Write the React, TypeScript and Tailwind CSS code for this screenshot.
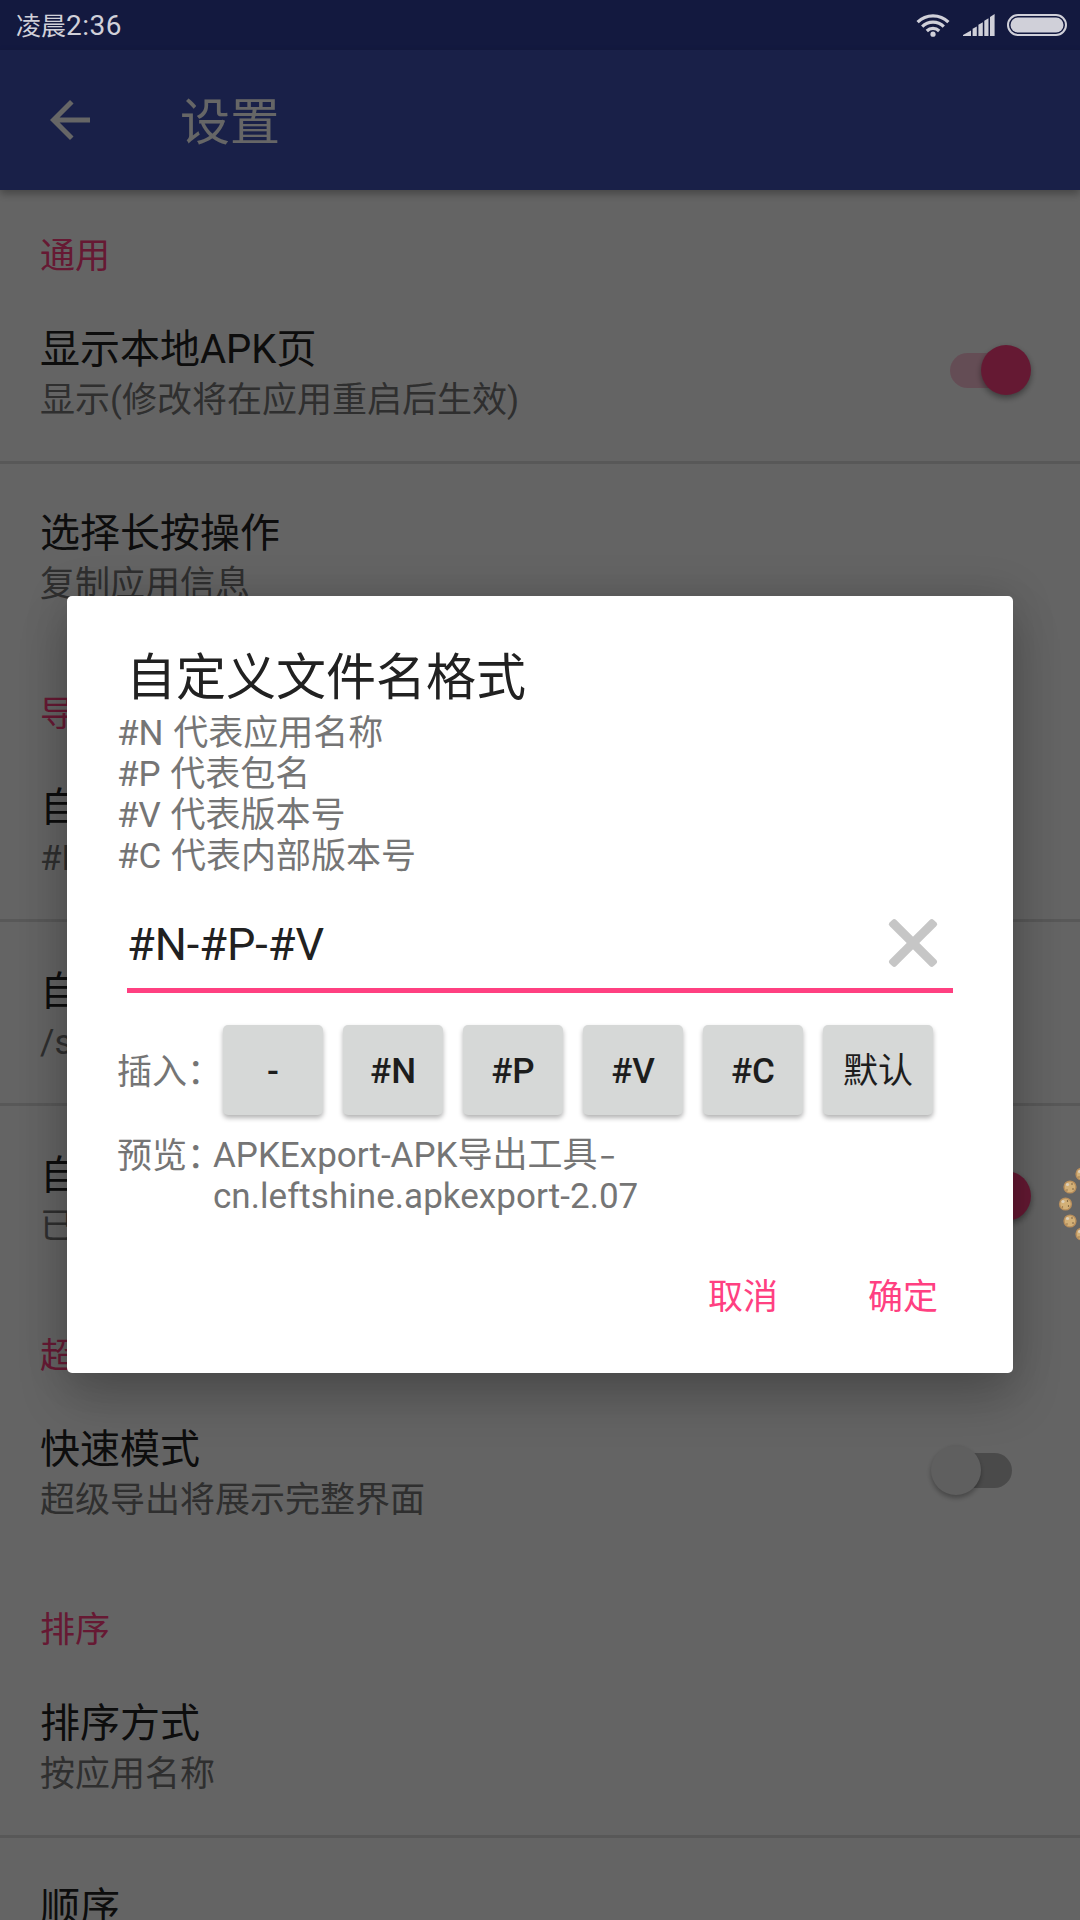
import React from 'react';

function Switch({ on }: { on?: boolean }) {
  return (
    <div className="flex h-[50px] w-[100px] shrink-0 items-center">
      <div
        className={
          on
            ? 'relative mx-[19px] h-[35px] w-[62px] rounded-full bg-[#FF4081]/30'
            : 'relative mx-[19px] h-[35px] w-[62px] rounded-full bg-[#bababa]'
        }
      >
        <div
          className={
            on
              ? 'absolute -top-[8px] -right-[19px] size-[50px] rounded-full bg-[#fd4081] shadow-[0_3px_6px_rgba(0,0,0,0.4)]'
              : 'absolute -top-[8px] -left-[19px] size-[50px] rounded-full bg-[#ededed] shadow-[0_3px_5px_rgba(0,0,0,0.3)]'
          }
        />
      </div>
    </div>
  );
}

function Section({ title, first }: { title: string; first?: boolean }) {
  return (
    <div
      className={
        first
          ? 'flex h-[90px] items-end px-10 text-[35px] leading-[47px] text-[#FF4081]'
          : 'flex h-[93px] items-end px-10 text-[35px] leading-[47px] text-[#FF4081]'
      }
    >
      {title}
    </div>
  );
}

interface PrefProps {
  title: string;
  summary: string;
  toggle?: 'on' | 'off';
  divider?: boolean;
}

function Pref({ title, summary, toggle, divider }: PrefProps) {
  return (
    <div
      className={
        divider
          ? 'flex h-[184px] items-center justify-between border-b-[3px] border-[#dddddd] pr-[49px] pl-10'
          : 'flex h-[181px] items-center justify-between pr-[49px] pl-10'
      }
    >
      <div className="flex flex-col pt-[7px]">
        <div className="text-[40px] leading-[52px] whitespace-nowrap text-[#212121]">{title}</div>
        <div className="text-[35px] leading-[49px] whitespace-nowrap text-[#757575]">{summary}</div>
      </div>
      {toggle && <Switch on={toggle === 'on'} />}
    </div>
  );
}

function StatusBar() {
  return (
    <div className="h-[50px] bg-[#303F9F]">
      <div className="relative z-20 flex h-[50px] items-center justify-between pr-[13px] pl-4 text-[#d0d0d9]">
        <span className="pt-[2px] text-[25px] leading-[50px]">
          凌晨<span className="text-[28px] tracking-[0.5px]">2:36</span>
        </span>
        <div className="flex items-center">
          <svg width="34" height="24" viewBox="0 0 34 24" fill="none" stroke="currentColor" strokeWidth="3.2">
            <path d="M1.6 9.2a21.8 21.8 0 0 1 30.8 0" />
            <path d="M6.2 13.6a15.3 15.3 0 0 1 21.6 0" />
            <path d="M10.8 18a8.8 8.8 0 0 1 12.4 0" />
            <circle cx="17" cy="21.2" r="2.6" fill="currentColor" stroke="none" />
          </svg>
          <svg className="ml-[13px]" width="33" height="22" viewBox="0 0 33 22" fill="currentColor">
            <path d="M0 22v-1l8-4.6V22z" />
            <path d="M9.600 22v-7.200l4.200-2.400V22z" />
            <path d="M15.400 22V10.800l4.400-2.600V22z" />
            <path d="M21.300 22V6.800l4.200-2.500V22z" />
            <path d="M27 22V3l4.600-3V22z" />
          </svg>
          <svg className="ml-[11px]" width="60" height="22" viewBox="0 0 60 22" fill="none">
            <rect x="1" y="1" width="58" height="20" rx="10" stroke="currentColor" strokeWidth="2" />
            <rect x="3.500" y="3.500" width="53" height="15" rx="7.500" fill="currentColor" />
          </svg>
        </div>
      </div>
    </div>
  );
}

function AppBar() {
  return (
    <div className="relative flex h-[140px] items-center bg-[#3F51B5] pl-10 text-white shadow-[0_4px_8px_rgba(0,0,0,0.3)]">
      <svg width="60" height="60" viewBox="0 0 24 24" fill="currentColor">
        <path d="M20 11H7.830l5.590-5.590L12 4l-8 8 8 8 1.410-1.410L7.830 13H20v-2z" />
      </svg>
      <div className="pt-[5px] pl-20 text-[50px] leading-[60px]">设置</div>
    </div>
  );
}

const keys = ['-', '#N', '#P', '#V', '#C'];

function FormatDialog() {
  return (
    <div className="flex h-[777px] w-[946px] flex-col rounded-[5px] bg-white pl-[50px] shadow-[0_26px_50px_rgba(0,0,0,0.2),0_0_45px_rgba(0,0,0,0.14)]">
      <div className="mt-[50px] pl-[9px] text-[50px] leading-[64px] text-[#212121]">自定义文件名格式</div>
      <div className="mt-[3px] text-[35px] leading-[41px] [word-spacing:1px] text-[#757575]">
        <div>#N 代表应用名称</div>
        <div>#P 代表包名</div>
        <div>#V 代表版本号</div>
        <div>#C 代表内部版本号</div>
      </div>
      <div className="mt-[31px] ml-[10px] flex h-[85px] w-[826px] justify-between border-b-[5px] border-[#FF4081] pr-[15px]">
        <div className="pt-[7px] text-[45px] leading-[60px] text-[#212121]">#N-#P-#V</div>
        <svg className="mt-[10px]" width="50" height="50" viewBox="-25 -25 50 50" fill="#c6c6c6">
          <rect x="-31" y="-4.500" width="62" height="9" rx="2.800" transform="rotate(45)" />
          <rect x="-31" y="-4.500" width="62" height="9" rx="2.800" transform="rotate(-45)" />
        </svg>
      </div>
      <div className="mt-8 flex items-center">
        <div className="w-[106px] pt-[5px] text-[35px] leading-[48px] whitespace-nowrap text-[#757575]">插入：</div>
        <div className="flex gap-5 text-[35px] font-medium text-[#1d1d1d]">
          {keys.map((k) => (
            <div
              key={k}
              className="flex h-[90px] w-[100px] items-center justify-center rounded-[5px] bg-[#d6d8d7] pt-[5px] shadow-[0_3px_5px_rgba(0,0,0,0.3)]"
            >
              {k}
            </div>
          ))}
          <div className="flex h-[90px] w-[110px] items-center justify-center rounded-[5px] bg-[#d6d8d7] pt-[5px] font-normal shadow-[0_3px_5px_rgba(0,0,0,0.3)]">
            默认
          </div>
        </div>
      </div>
      <div className="mt-5 flex text-[35px] leading-[41px] text-[#757575]">
        <div className="w-[96px] pt-px whitespace-nowrap">预览：</div>
        <div>
          <div>
            APKExport-APK导出工具
            <span className="ml-[2px] inline-block origin-left scale-x-140 font-['Noto_Sans_CJK_SC'] leading-[0]">-</span>
          </div>
          <div className="tracking-[0.04px]">cn.leftshine.apkexport-2.07</div>
        </div>
      </div>
      <div className="mt-[57px] mr-[75px] flex justify-end gap-[90px] text-[35px] leading-[48px] text-[#FF4081]">
        <div>取消</div>
        <div>确定</div>
      </div>
    </div>
  );
}

function FloatingRing() {
  const balls = [
    [1082, 1174],
    [1070, 1187],
    [1065.5, 1204],
    [1070, 1221],
    [1082, 1234],
  ];
  return (
    <svg className="absolute top-[1164px] left-[1056px]" width="24" height="80" viewBox="1056 1164 24 80">
      {balls.map(([x, y]) => (
        <g key={y}>
          <circle cx={x} cy={y} r="6.600" fill="#b98f5c" />
          <circle cx={x} cy={y} r="5.200" fill="#d3b077" />
          <circle cx={x - 2.500} cy={y - 2.500} r="1.600" fill="#ddd0ba" />
          <circle cx={x + 2} cy={y - 3} r="0.700" fill="#5f4a30" />
          <circle cx={x + 3} cy={y + 2} r="0.700" fill="#5f4a30" />
          <circle cx={x - 3} cy={y + 3} r="0.700" fill="#8a6a40" />
        </g>
      ))}
    </svg>
  );
}

export default function App() {
  return (
    <div className="relative h-[1920px] w-[1080px] overflow-hidden bg-[#fafafa] font-[Roboto,'Noto_Sans_CJK_SC',sans-serif]">
      <StatusBar />
      <AppBar />
      <Section title="通用" first />
      <Pref title="显示本地APK页" summary="显示(修改将在应用重启后生效)" toggle="on" divider />
      <Pref title="选择长按操作" summary="复制应用信息" />
      <Section title="导出" />
      <Pref title="自定义文件名格式" summary="#N-#P-#V" divider />
      <Pref title="自定义导出路径" summary="/sdcard/APKExport" divider />
      <Pref title="自动清理" summary="已开启" toggle="on" />
      <Section title="超级导出" />
      <Pref title="快速模式" summary="超级导出将展示完整界面" toggle="off" />
      <Section title="排序" />
      <Pref title="排序方式" summary="按应用名称" divider />
      <Pref title="顺序" summary="升序" />
      <div className="absolute inset-0 z-10 flex justify-center bg-black/60 pt-[596px]">
        <FormatDialog />
        <FloatingRing />
      </div>
    </div>
  );
}
